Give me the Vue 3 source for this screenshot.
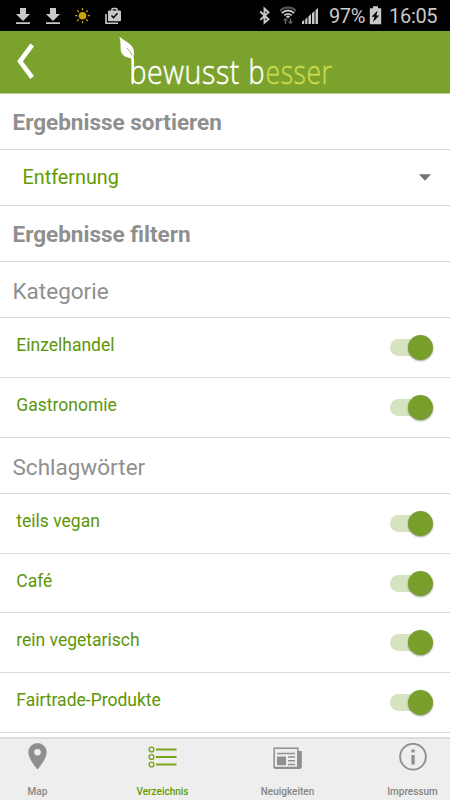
<script setup>
import { ref } from 'vue'

const categories = ref([
  { label: 'Einzelhandel', on: true },
  { label: 'Gastronomie', on: true },
])
const tags = ref([
  { label: 'teils vegan', on: true },
  { label: 'Café', on: true, short: true },
  { label: 'rein vegetarisch', on: true },
  { label: 'Fairtrade-Produkte', on: true },
])
</script>

<template>
  <div class="screen">
    <div class="status">
      <svg class="status-icons" width="140" height="31" viewBox="0 0 140 31">
        <g fill="#c9c9c9">
          <path d="M20 8h6v6h4l-7 7-7-7h4zM16 22.3h14v1.700H16z" />
          <path d="M50 8h6v6h4l-7 7-7-7h4zM46 22.3h14v1.700H46z" />
        </g>
        <circle cx="82.500" cy="15.700" r="3.800" fill="#c9a50b" />
        <path d="M82.500 8v2.300M82.500 21v2.300M75 15.700h2.300M87.700 15.700H90M77.200 10.400l1.600 1.600M86.200 19.400l1.600 1.600M87.800 10.400l-1.600 1.600M78.800 19.400l-1.600 1.600" stroke="#c9a50b" stroke-width="1.300" />
        <path d="M106 14v9.200h12" fill="none" stroke="#c9c9c9" stroke-width="1.600" />
        <path d="M112 11v-1.500a1 1 0 0 1 1-1h3a1 1 0 0 1 1 1V11" fill="none" stroke="#c9c9c9" stroke-width="1.600" />
        <rect x="108" y="10.500" width="13" height="10.800" rx="1" fill="#c9c9c9" />
        <path d="M111.500 15.500l2 2.200 4-4.500" fill="none" stroke="#000" stroke-width="1.500" />
      </svg>
      <div class="status-right">
        <svg width="66" height="31" viewBox="0 0 66 31">
          <path d="M2.200 11.500l8.300 7.700-4 3.500V8.700l4 3.500-8.300 7.700" fill="none" stroke="#c9c9c9" stroke-width="1.900" />
          <g fill="none" transform="translate(-1.500 0)">
            <path d="M23.500 10.600q8-6.400 16 0" stroke="#555" stroke-width="2" />
            <path d="M25.300 13q6.200-5 12.400 0M27.700 15.400q3.800-3 7.600 0" stroke="#c9c9c9" stroke-width="1.800" />
            <path d="M29 24v-5M34 18.500v5" stroke="#666" stroke-width="1.500" />
            <path d="M31.500 18.500l-2.200-2.200q2.200-1.500 4.400 0z" fill="#c9c9c9" />
            <path d="M26.400 20.500L29 17.800l2.600 2.700zM31.400 21.500h5.200L34 24.200z" fill="#666" />
          </g>
          <path d="M44 24v-2.400l2.200-1.600v4zM47.200 24v-4.700l2.200-2V24zM50.400 24v-7.500l2.600-2.400V24zM54 24V13.300l2.500-2.300v13zM57.500 24V10.200L60 8v16z" fill="#c9c9c9" />
        </svg>
        <span class="percent">97%</span>
        <svg class="battery" width="13" height="31" viewBox="0 0 13 31">
          <path d="M4 6.300h5v2h3.200v15.900H.8V8.300H4z" fill="#c9c9c9" />
          <path d="M8.700 10.500L2.500 16.800h3L4 22l6.300-6.600h-3z" fill="#000" />
        </svg>
        <span class="clock">16:05</span>
      </div>
    </div>

    <header class="header">
      <svg width="450" height="62" viewBox="0 0 450 62">
        <path d="M32.200 13.800L20 30.300l12.200 16.200" fill="none" stroke="#fff" stroke-width="4.600" />
        <path d="M119.300 5.500c4.500 4.500 12.300 6.500 14.300 13 .7 3 .2 5.500-.1 8 .6 3 .4 8 .4 25.500h-2.300V30c0-1.500-.2-2-.9-2.800-5-.7-9.300-3.200-9.900-7.700-.6-5 .3-9-1.500-14z" fill="#fff" />
        <path d="M127 17q3.700 3.500 5 7.500" fill="none" stroke="#7ba22d" stroke-width=".8" />
        <g class="logo">
          <text x="129.500" y="52.700" textLength="110.500" lengthAdjust="spacingAndGlyphs">bewusst</text>
          <text x="248.500" y="52.700" textLength="16.500" lengthAdjust="spacingAndGlyphs">b</text>
          <text class="accent" x="265.500" y="52.700" textLength="67" lengthAdjust="spacingAndGlyphs">esser</text>
        </g>
      </svg>
    </header>

    <main class="content">
      <h2 class="heading">Ergebnisse sortieren</h2>
      <div class="select">
        <span>Entfernung</span>
        <svg width="14" height="8" viewBox="0 0 14 8"><path d="M1 .3h12L7 6.800z" fill="#737373" /></svg>
      </div>
      <h2 class="heading">Ergebnisse filtern</h2>
      <h3 class="subheading">Kategorie</h3>
      <div v-for="item in categories" :key="item.label" class="row" @click="item.on = !item.on">
        <span class="label">{{ item.label }}</span>
        <span class="toggle" :class="{ off: !item.on }"><span class="knob"></span></span>
      </div>
      <h3 class="subheading">Schlagwörter</h3>
      <div v-for="item in tags" :key="item.label" class="row" :class="{ short: item.short }" @click="item.on = !item.on">
        <span class="label">{{ item.label }}</span>
        <span class="toggle" :class="{ off: !item.on }"><span class="knob"></span></span>
      </div>
    </main>

    <nav class="tabs">
      <a class="tab">
        <svg width="22" height="28" viewBox="0 0 22 28"><path fill-rule="evenodd" d="M10.500 0a9.200 9.200 0 0 0-9.200 9.200c0 6.800 9.200 17.300 9.200 17.300s9.200-10.500 9.200-17.300A9.200 9.200 0 0 0 10.500 0zm0 5.900a3.300 3.300 0 1 1 0 6.600 3.300 3.300 0 0 1 0-6.600z" fill="#8f8f8f" /></svg>
        <span>Map</span>
      </a>
      <a class="tab active">
        <svg width="30" height="28" viewBox="0 0 30 28" fill="none" stroke="#77a51a">
          <g stroke-width="1.400"><circle cx="3.500" cy="6.500" r="2.400" /><circle cx="3.500" cy="14" r="2.400" /><circle cx="3.500" cy="21.500" r="2.400" /></g>
          <path d="M8 6.500h20.500M8 14h20.500M8 21.500h20.500" stroke-width="1.900" />
        </svg>
        <span>Verzeichnis</span>
      </a>
      <a class="tab">
        <svg width="30" height="28" viewBox="0 0 30 28">
          <path d="M24.500 8h4.300v16.200L27.300 26H2L.5 24.500z" fill="#8f8f8f" />
          <rect x="1.200" y="5.200" width="23.600" height="19.300" fill="#eee" stroke="#8f8f8f" stroke-width="1.500" />
          <path d="M4 10.500h18M15 14h7M15 17.700h7M15 21.500h7" stroke="#8f8f8f" stroke-width="1.400" />
          <rect x="4" y="13.500" width="9" height="8.700" fill="#8f8f8f" />
        </svg>
        <span>Neuigkeiten</span>
      </a>
      <a class="tab">
        <svg width="28" height="28" viewBox="0 0 28 28">
          <circle cx="14" cy="13.700" r="12.900" fill="none" stroke="#8f8f8f" stroke-width="1.900" />
          <path d="M12.400 6.500h3.300v3.100h-3.300zM12.400 12h3.300v9.500h-3.300z" fill="#8f8f8f" />
        </svg>
        <span>Impressum</span>
      </a>
    </nav>
  </div>
</template>

<style>
body {
  margin: 0;
  overflow: hidden;
}
</style>

<style scoped>
.screen {
  width: 450px;
  height: 800px;
  display: flex;
  flex-direction: column;
  background: #fff;
  font-family: Roboto, "Liberation Sans", sans-serif;
  overflow: hidden;
}
.status {
  flex: none;
  height: 31px;
  display: flex;
  justify-content: space-between;
  background: #000;
  color: #c9c9c9;
}
.status svg {
  display: block;
}
.status-right {
  display: flex;
  line-height: 33px;
  font-size: 20px;
  padding-right: 12px;
}
.percent {
  width: 36px;
  margin-left: 5px;
  letter-spacing: -0.4px;
  white-space: nowrap;
}
.battery {
  margin-left: 4px;
}
.clock {
  margin-left: 7px;
  width: 49px;
  letter-spacing: -0.3px;
  white-space: nowrap;
}
.header {
  flex: none;
  height: 62px;
  background: #7ba22d;
  border-bottom: 1px solid #b9cf8d;
}
.header svg {
  display: block;
}
.logo {
  font-family: "Open Sans", sans-serif;
  font-weight: 300;
  font-size: 33px;
  letter-spacing: 0.7px;
  fill: #fff;
  stroke: #fff;
  stroke-width: 0.5px;
}
.accent {
  fill: #c8d94d;
  stroke: #c8d94d;
}
.content {
  flex: 1;
  min-height: 0;
  overflow: hidden;
}
.heading,
.subheading,
.select,
.row {
  box-sizing: border-box;
  margin: 0;
  border-bottom: 1px solid #d9d9d9;
}
.heading,
.subheading {
  height: 56px;
  padding: 2px 12px 0 12.5px;
  line-height: 53px;
  font-size: 22.5px;
  color: #8f8f8f;
}
.subheading {
  font-weight: 400;
  line-height: 55px;
}
.select {
  height: 56px;
  display: flex;
  align-items: center;
  justify-content: space-between;
  padding: 0 18px 0 22.5px;
  font-size: 19.8px;
  color: #639b00;
}
.row {
  height: 60px;
  display: flex;
  justify-content: space-between;
  padding: 16px 17px 0 16.3px;
  font-size: 17.5px;
  line-height: 22px;
  color: #5c9608;
}
.row.short {
  height: 59px;
}
.toggle {
  width: 43px;
  height: 26px;
  display: flex;
  align-items: center;
  justify-content: flex-end;
  position: relative;
}
.toggle::before {
  content: "";
  position: absolute;
  left: 0;
  top: 4.5px;
  width: 37px;
  height: 17px;
  border-radius: 9px;
  background: #d7e3c0;
}
.toggle.off {
  justify-content: flex-start;
}
.knob {
  position: relative;
  width: 25px;
  height: 25px;
  border-radius: 50%;
  background: #789f2b;
  box-shadow: 0 1px 2px rgba(0, 0, 0, 0.4);
}
.tabs {
  flex: none;
  box-sizing: border-box;
  height: 63px;
  display: grid;
  grid-template-columns: repeat(4, 125px);
  justify-content: center;
  background: #eee;
  border-top: 2px solid #dcdcdc;
  padding-top: 4px;
}
.tab {
  display: flex;
  flex-direction: column;
  align-items: center;
  color: #858585;
  font-size: 10px;
  font-weight: 500;
  line-height: 14px;
  gap: 14px;
}
.tab svg {
  display: block;
}
.active {
  color: #639b00;
}
</style>
